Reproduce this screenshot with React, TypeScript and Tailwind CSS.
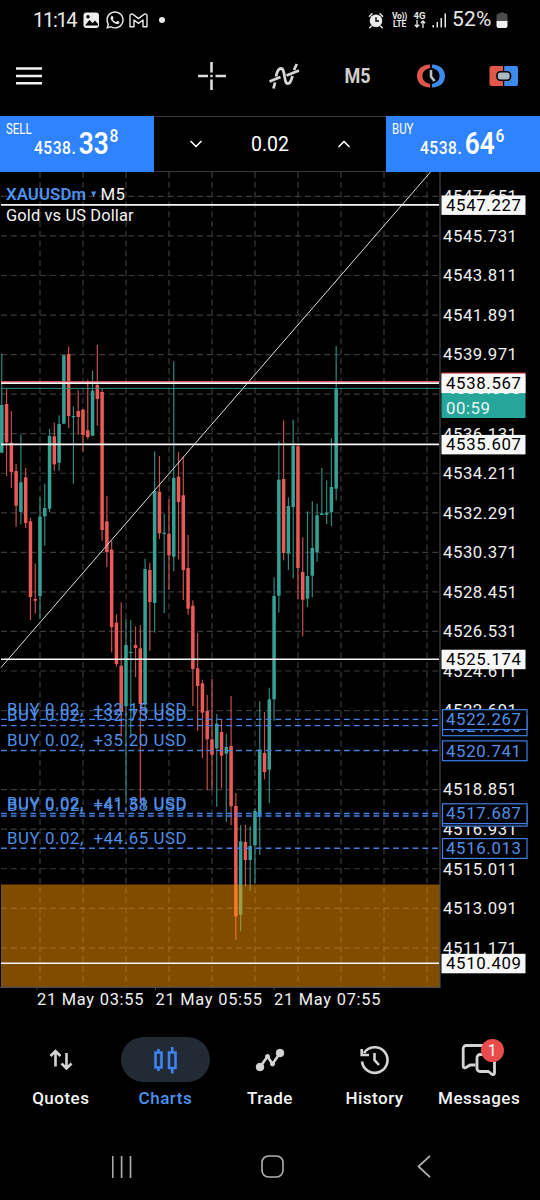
import React from 'react';
import { ChevronDown, ChevronUp } from 'lucide-react';
import { FaWhatsapp } from 'react-icons/fa';

type Candle = ['u' | 'd', number, number, number, number];

// direction, wick top, body top, body bottom, wick bottom
const candles: Candle[] = [
  ['u', 353.3, 405, 452.7, 452.7],
  ['d', 389, 404, 442.3, 476],
  ['d', 411, 442.7, 472, 488],
  ['d', 464, 471, 505.7, 526.7],
  ['u', 434.7, 482.3, 512, 524.3],
  ['d', 468, 477.3, 523, 528],
  ['d', 518, 521.3, 597, 620],
  ['d', 563.3, 599, 600.7, 613.3],
  ['u', 497.3, 516.7, 596, 618.7],
  ['u', 483.7, 508, 516.3, 545.7],
  ['u', 429, 436, 508.7, 512],
  ['d', 422.7, 436.3, 464.3, 470.7],
  ['u', 415.3, 424, 462.7, 470.7],
  ['u', 355, 355.3, 423.7, 424.3],
  ['d', 346.7, 354, 416, 428],
  ['u', 406.3, 416, 417.3, 483.7],
  ['d', 390.3, 411, 417, 435],
  ['d', 409, 409.7, 435, 451.7],
  ['d', 379.7, 430.3, 437, 439.3],
  ['u', 370.7, 390.7, 435.7, 436],
  ['d', 345, 385, 399, 425.7],
  ['d', 389, 392, 530, 540.7],
  ['d', 496, 521.3, 552, 567],
  ['d', 541, 549.7, 627, 652.3],
  ['d', 614.3, 622.7, 664, 666.7],
  ['d', 602.3, 665.7, 712, 736.7],
  ['u', 619, 645, 706, 803],
  ['u', 620, 652, 653, 737],
  ['d', 626.3, 645, 648, 677.3],
  ['d', 625, 648.3, 704, 803],
  ['u', 558.7, 569, 704, 712],
  ['d', 562.7, 570, 602, 650.7],
  ['u', 451.3, 491, 603, 632.7],
  ['d', 456, 491.7, 533.3, 539],
  ['u', 514, 532.7, 534, 613.3],
  ['d', 499.3, 533.7, 555.3, 589.7],
  ['u', 361.3, 478, 556.7, 571.3],
  ['d', 452, 476.7, 502, 559.3],
  ['d', 456.7, 495.3, 570, 600],
  ['d', 535, 568, 608.7, 614.7],
  ['d', 600.3, 605.7, 669, 706],
  ['d', 633, 668.3, 686, 730.7],
  ['d', 679.7, 683.3, 712.7, 758],
  ['d', 695, 711, 739.3, 790.3],
  ['d', 678.7, 739.3, 754.7, 789.7],
  ['u', 714, 723.7, 748.3, 806.7],
  ['d', 719.3, 732, 755.7, 788.3],
  ['u', 733.7, 747, 753.7, 822],
  ['d', 696, 746, 806.3, 825.3],
  ['d', 793, 806, 916.3, 940],
  ['u', 825, 841.3, 914.7, 931.3],
  ['d', 825, 842, 860, 886],
  ['u', 826.3, 846, 860, 891],
  ['u', 808.3, 811, 845.3, 883.3],
  ['u', 701.3, 749.7, 816.7, 855],
  ['d', 712, 753, 772, 779.3],
  ['u', 687.7, 699.3, 769.7, 803],
  ['u', 577.3, 596, 699.3, 720.7],
  ['u', 441.3, 479.7, 595.7, 612.7],
  ['d', 420.3, 479, 553, 560.3],
  ['u', 497.3, 506, 553.7, 570],
  ['u', 419.7, 446, 507, 578.3],
  ['d', 444.3, 446.3, 568, 599],
  ['d', 537.3, 572, 599.7, 636.3],
  ['u', 511.3, 576, 598.7, 607],
  ['u', 501.3, 548, 575.7, 597.3],
  ['u', 503.7, 515.3, 552, 561.7],
  ['u', 468, 513.3, 515, 515],
  ['u', 480.3, 512.7, 514.7, 524],
  ['u', 438.3, 487, 512.3, 526],
  ['u', 346, 388.3, 488.7, 500.3],
];

const gridPrices = [...Array(20)].map((_, i) => ({
  price: (4547.651 - i * 1.92).toFixed(3),
  y: 196.4 + i * 39.55,
}));

const gridColumns = [...Array(10)].map((_, i) => 40 + i * 43);

const levels = [
  { price: '4547.227', y: 204.9 },
  { price: '4538.567', y: 383.1 },
  { price: '4535.607', y: 444.4 },
  { price: '4525.174', y: 659.2 },
  { price: '4510.409', y: 963.3 },
];

const orders = [
  { price: '4521.966', y: 725.6, profit: '+32.73' },
  { price: '4522.267', y: 719.4, profit: '+32.15' },
  { price: '4520.741', y: 750.6, profit: '+35.20' },
  { price: '4517.558', y: 816, profit: '+41.58' },
  { price: '4517.687', y: 813.5, profit: '+41.31' },
  { price: '4516.013', y: 848.3, profit: '+44.65' },
];

const times = [
  { label: '21 May 03:55', x: 37 },
  { label: '21 May 05:55', x: 155.5 },
  { label: '21 May 07:55', x: 274 },
];

function StatusBar() {
  return (
    <div className="flex h-10 items-center justify-between pl-[33px] pr-[32px] text-[#e8e8e8]">
      <div className="flex items-center">
        <span className="w-[50px] text-[20px] tracking-[-1.3px]">11:14</span>
        <svg width="17" height="17" viewBox="0 0 17 17">
          <rect x="0.5" y="0.5" width="15.5" height="15.5" rx="3" fill="#ececec" />
          <path d="M2 13.5 6.5 8l3 3 2.5-2.5 3 3.5v1.5z" fill="#000" />
          <circle cx="5" cy="4.7" r="1.7" fill="#000" />
        </svg>
        <FaWhatsapp size={20} className="ml-[5px]" />
        <svg className="ml-[4px]" width="19" height="15" viewBox="0 0 19 15" fill="none" stroke="#e8e8e8" strokeWidth="1.4" strokeLinejoin="round">
          <path d="M1 13.7V2.8C1 .8 3 .6 4 1.4L9.5 5.6 15 1.4C16 .6 18 .8 18 2.8V13.7H14V7L9.5 10.4 5 7V13.7Z" />
        </svg>
        <span className="ml-[11px] size-[6px] rounded-full bg-[#e8e8e8]" />
      </div>
      <div className="flex items-center">
        <svg width="16" height="17" viewBox="0 0 16 17">
          <circle cx="8" cy="8.7" r="6.3" fill="#ececec" />
          <path d="M1.5 4.2 4 1.8M14.5 4.2 12 1.8M3.2 14.3 1.8 15.8M12.8 14.3 14.2 15.8" stroke="#ececec" strokeWidth="1.5" strokeLinecap="round" />
          <path d="M8 5.2V9H11" stroke="#000" strokeWidth="1.4" fill="none" />
        </svg>
        <div className="ml-[7px] w-[17px] whitespace-nowrap text-center text-[8.5px] font-bold leading-[8.5px] tracking-[-0.3px]">
          <div>Vo))</div>
          <div>LTE</div>
        </div>
        <div className="ml-[4px] flex w-[15px] flex-col items-center text-[9.5px] font-bold leading-[8px]">
          <span>4G</span>
          <svg width="12" height="8" viewBox="0 0 12 8" fill="none" stroke="#e8e8e8" strokeWidth="1.3">
            <path d="M3 0V7M.8 4.7 3 7 5.2 4.7M9 8V1M6.8 3.3 9 1 11.2 3.3" />
          </svg>
        </div>
        <svg className="ml-[5px]" width="15" height="15" viewBox="0 0 15 15" fill="#e8e8e8">
          <rect x="0.5" y="12" width="1.5" height="2.5" />
          <rect x="4.5" y="9" width="1.5" height="5.5" />
          <rect x="8.5" y="5" width="1.5" height="9.5" />
          <rect x="12.5" y="0.5" width="1.5" height="14" />
        </svg>
        <span className="ml-[5px] w-[44px] text-[21px] tracking-[0.2px]">52%</span>
        <svg width="12" height="17" viewBox="0 0 12 17">
          <path d="M3.5 1.5a1.5 1.5 0 0 1 1.5-1h2a1.5 1.5 0 0 1 1.5 1h1a2 2 0 0 1 2 2V9H.5V3.5a2 2 0 0 1 2-2z" fill="#4d4d4d" />
          <path d="M.5 9h11v5a2 2 0 0 1-2 2h-7a2 2 0 0 1-2-2z" fill="#f0f0f0" />
        </svg>
      </div>
    </div>
  );
}

function Toolbar() {
  return (
    <div className="flex h-[76px] items-center justify-between pl-4">
      <svg className="mb-[4px]" width="26" height="18" viewBox="0 0 26 18">
        <path d="M0 1.5H26M0 9H26M0 16.3H26" stroke="#f2f2f2" strokeWidth="2.6" />
      </svg>
      <div className="flex h-[72px] items-center pb-[4px]">
        <button className="flex w-[73px] justify-center">
          <svg width="28" height="28" viewBox="0 0 28 28">
            <path d="M13.5 0V10.5M13.5 17.5V28M0 14H10M17.500 14H28" stroke="#dcdcdc" strokeWidth="2.6" />
            <rect x="12.300" y="12.800" width="2.400" height="2.400" fill="#dcdcdc" />
          </svg>
        </button>
        <button className="flex w-[73px] justify-center">
          <svg width="32" height="26" viewBox="0 0 32 26" fill="none" stroke="#d6d6d6" strokeWidth="2.800">
            <path d="M.5 18.500 11.500 14M17.500 12.500 30 7.500" />
            <path d="M4.500 25.500 6 19.500M7 13.500C8 8.500 9 5.500 12 5.500 16.500 5.500 14.500 20.500 18.800 20.500 21.500 20.500 22 17.500 23.500 13M25 7 27.800 1" />
          </svg>
        </button>
        <button className="flex w-[73px] justify-center">
          <span className="scale-x-[0.9] text-[20px] font-bold text-[#cfcfcf]">M5</span>
        </button>
        <button className="flex w-[73px] justify-center">
          <svg width="28" height="24" viewBox="0 0 28 24" fill="none">
            <path d="M13 .5C5 .5 0 5.500 0 12S5 23.500 13 23.500V20C9 19 5.500 17 5.500 12S9 5 13 4Z" fill="#e0564a" />
            <path d="M15 .5C23 .5 28 5.500 28 12S23 23.500 15 23.500V20C19 19 22.500 17 22.500 12S19 5 15 4Z" fill="#3b8bee" />
            <path d="M14 6V12.500L17.500 17" stroke="#b7c4cd" strokeWidth="2.600" />
          </svg>
        </button>
        <button className="flex w-[73px] justify-center">
          <svg width="30" height="20" viewBox="0 0 30 20">
            <path d="M2.500 0H14V20H2.500A2 2 0 0 1 .5 18V2A2 2 0 0 1 2.500 0Z" fill="#e0564a" />
            <path d="M15.200 0H27A2 2 0 0 1 29 2V18A2 2 0 0 1 27 20H15.200Z" fill="#3b8bee" />
            <rect x="8" y="5.800" width="13.500" height="8.500" rx="3.500" fill="#a9bac5" stroke="#000" strokeWidth="1.600" />
          </svg>
        </button>
      </div>
    </div>
  );
}

interface PricePanelProps {
  label: string;
  whole: string;
  big: string;
  pip: string;
}

function PricePanel({ label, whole, big, pip }: PricePanelProps) {
  return (
    <div className="h-[56px] w-[154px] bg-[#3083ff] pl-[6px] pt-[6px] text-white">
      <div className="h-[14px] origin-left scale-x-[0.82] text-[14px] leading-[14px]">{label}</div>
      <div className="ml-[28px] mt-[-9px] flex origin-left scale-x-[0.82] items-baseline leading-[32px]">
        <span className="w-[54.500px] text-[19px] font-medium tracking-[0.600px]">{whole}</span>
        <span className="w-[37.500px] text-[32px] font-semibold">{big}</span>
        <span className="relative -top-[12px] text-[19px] font-medium leading-none">{pip}</span>
      </div>
    </div>
  );
}

function Chart() {
  return (
    <svg width="540" height="842" viewBox="0 172 540 842" className="block" fontSize="16.800">
      <g stroke="#3a3a3a" strokeWidth="1.200" strokeDasharray="6 3.800">
        {gridPrices.map(({ price, y }) => (
          <line key={price} x1="1" x2="442" y1={y} y2={y} />
        ))}
        {gridColumns.map((x) => (
          <line key={x} x1={x} x2={x} y1="172" y2="987" />
        ))}
      </g>

      {candles.map(([dir, high, top, bottom, low], i) => {
        const x = 40 + (i - 8) * 4.777;
        return (
          <g key={i} fill={dir === 'u' ? '#35a093' : '#ea5a57'}>
            <rect x={x - 0.6} y={high} width="1.2" height={low - high} opacity="0.85" />
            <rect x={x - 1.75} y={top} width="3.5" height={Math.max(bottom - top, 1)} />
          </g>
        );
      })}

      {/* demand zone */}
      <rect x="1" y="884.500" width="439" height="102.500" fill="#ff9800" opacity="0.500" />

      <line x1="1" y1="667.500" x2="430.500" y2="172" stroke="#dedede" />
      <path d="M1 381.600H440" stroke="#e0545c" strokeWidth="1.200" />
      <path d="M1 388.400H440" stroke="#2b8f85" strokeWidth="1" />
      {levels.map(({ price, y }) => (
        <line key={price} x1="1" x2="439" y1={y} y2={y} stroke="#f7f7f7" strokeWidth="1.600" />
      ))}
      <path d="M440 172V987.300H0" fill="none" stroke="#4a4a50" strokeWidth="1.200" />

      {orders.map(({ price, y, profit }) => (
        <g key={price}>
          <line x1="1" x2="440" y1={y} y2={y} stroke="#4280e8" strokeWidth="1.400" strokeDasharray="5.800 4" />
          <text x="7" y={y - 4.6} fill="#4f8fe8" textLength="179.500" className="whitespace-pre">
            {`BUY 0.02,  ${profit} USD`}
          </text>
        </g>
      ))}

      {gridPrices.map(({ price, y }) => (
        <text key={price} x="443" y={y + 5.8} fill="#f0f0f0" textLength="74">{price}</text>
      ))}

      {orders.map(({ price, y }) => (
        <g key={price}>
          <rect x="442.500" y={y - 9.7} width="84.500" height="19.800" fill="#000" stroke="#3f7fe6" strokeWidth="1.200" />
          <text x="446" y={y + 5.9} fill="#4f8fe8" textLength="75">{price}</text>
        </g>
      ))}

      <rect x="441.500" y="372.500" width="84" height="20" fill="#d0383f" />
      <rect x="441.500" y="379" width="84" height="39" fill="#26a69a" />
      <text x="446" y="394" fill="#fff" textLength="75">4538.338</text>
      <text x="446" y="414" fill="#e6f5f3" textLength="44">00:59</text>
      {levels.map(({ price, y }) => (
        <g key={price}>
          <rect x="441.500" y={y - 9.5} width="84" height="19.500" fill="#f8f8f8" />
          <text x="446" y={y + 6} fill="#000" textLength="75">{price}</text>
        </g>
      ))}

      {times.map(({ label, x }) => (
        <g key={label}>
          <line x1={x} x2={x} y1="987" y2="990" stroke="#4a4a50" />
          <text x={x} y="1005" fill="#f0f0f0" textLength="106.500" fontSize="16.400">{label}</text>
        </g>
      ))}

      <text x="6" y="199.800" fill="#4b92f0" fontWeight="600" textLength="80">XAUUSDm</text>
      <path d="M91 191.500H96.200L93.600 197Z" fill="#4b92f0" />
      <text x="100.500" y="199.800" fill="#f4f4f4" textLength="24.500">M5</text>
      <text x="6" y="220.800" fill="#f4f4f4" textLength="127.500" fontSize="16.400">Gold vs US Dollar</text>
    </svg>
  );
}

const tabs = [
  {
    name: 'Quotes',
    icon: (
      <svg width="24" height="22" viewBox="0 0 24 22" fill="none" stroke="#d4d4d4" strokeWidth="2.6">
        <path d="M6.5 17.5V3M1.5 7 6.5 2 11.5 7M17.5 4V18.5M12.5 14.5 17.5 19.5 22.5 14.5" />
      </svg>
    ),
  },
  {
    name: 'Charts',
    icon: (
      <svg width="26" height="28" viewBox="0 0 26 28" fill="none" stroke="#3f82f4" strokeWidth="2.6">
        <path d="M3.5 6.5H9.5V21.5H3.5ZM6.5 3V6.5M6.5 21.5V25M17 6.5H23.5V22H17ZM20.2 1V6.5M20.2 22V27.5" />
      </svg>
    ),
  },
  {
    name: 'Trade',
    icon: (
      <svg width="30" height="26" viewBox="0 0 30 26" fill="#d4d4d4" stroke="#d4d4d4">
        <path d="M5 20 12.5 9.5 17.5 17 25 6" fill="none" strokeWidth="2.6" strokeLinejoin="round" />
        <circle cx="5" cy="20" r="3.8" />
        <circle cx="25" cy="6" r="3.8" />
        <circle cx="12.5" cy="9.5" r="2" />
        <circle cx="17.5" cy="17" r="2" />
      </svg>
    ),
  },
  {
    name: 'History',
    icon: (
      <svg width="30" height="30" viewBox="0 0 30 30" fill="none" stroke="#d4d4d4" strokeWidth="2.6">
        <path d="M2 16.5A12.8 12.8 0 1 0 4 8M1.700 4V10H9M14.500 8V15L19 20" />
      </svg>
    ),
  },
  {
    name: 'Messages',
    icon: (
      <svg width="36" height="32" viewBox="0 0 36 32" fill="none" stroke="#d4d4d4" strokeWidth="2.8" strokeLinejoin="round">
        <path d="M14.5 21H9L5 23.5C3 24.5 2.2 23.5 2.2 22V4.5A3 3 0 0 1 5.2 1.5H29A3 3 0 0 1 32 4.5V9" />
        <path d="M19 10.5H31A2.5 2.5 0 0 1 33.5 13V29C33.5 31 32 31 30.5 30L27.5 27.5H19A3 3 0 0 1 16 24.5V13.5A3 3 0 0 1 19 10.5Z" />
      </svg>
    ),
    badge: '1',
  },
];

function BottomNav() {
  return (
    <nav className="flex h-[110px] px-[8.5px] pt-[23px]">
      {tabs.map((tab) => (
        <button key={tab.name} className="flex flex-1 flex-col items-center">
          <span
            className={`relative flex h-[45px] w-[89px] items-center justify-center rounded-full ${
              tab.name === 'Charts' ? 'bg-[#222a33]' : ''
            }`}
          >
            {tab.icon}
            {tab.badge && (
              <span className="absolute left-[46px] top-[2px] flex size-[23px] items-center justify-center rounded-full bg-[#ea4b4b] text-[16px] text-white">
                {tab.badge}
              </span>
            )}
          </span>
          <span
            className={`mt-[5px] text-[17px] font-medium leading-[22px] tracking-[0.5px] ${
              tab.name === 'Charts' ? 'text-[#4b92f0]' : 'text-[#f4f4f4]'
            }`}
          >
            {tab.name}
          </span>
        </button>
      ))}
    </nav>
  );
}

function SystemNav() {
  return (
    <div className="flex h-[76px] items-center pl-[112px] pt-[9px]">
      <svg width="20" height="22" viewBox="0 0 20 22">
        <path d="M.7 0V22M9.6 0V22M18.5 0V22" stroke="#a8a8a8" strokeWidth="1.7" />
      </svg>
      <svg className="ml-[129px]" width="23" height="23" viewBox="0 0 23 23">
        <rect x="1" y="1" width="21" height="21" rx="6.5" fill="none" stroke="#b0b0b0" strokeWidth="1.6" />
      </svg>
      <svg className="ml-[133px]" width="14" height="23" viewBox="0 0 14 23">
        <path d="M13 .8 1.5 11.5 13 22.2" fill="none" stroke="#b0b0b0" strokeWidth="1.8" />
      </svg>
    </div>
  );
}

export default function App() {
  return (
    <div className="flex h-[1200px] w-[540px] flex-col overflow-hidden bg-black font-['Roboto',sans-serif] text-white">
      <StatusBar />
      <Toolbar />
      <div className="flex h-[56px]">
        <PricePanel label="SELL" whole="4538." big="33" pip="8" />
        <div className="flex flex-1 items-center justify-between border-y border-[#3a3a40] px-[32px]">
          <ChevronDown size={20} strokeWidth={2} />
          <span className="pt-[2px] text-[19.500px]">0.02</span>
          <ChevronUp size={20} strokeWidth={2} />
        </div>
        <PricePanel label="BUY" whole="4538." big="64" pip="6" />
      </div>
      <Chart />
      <BottomNav />
      <SystemNav />
    </div>
  );
}
